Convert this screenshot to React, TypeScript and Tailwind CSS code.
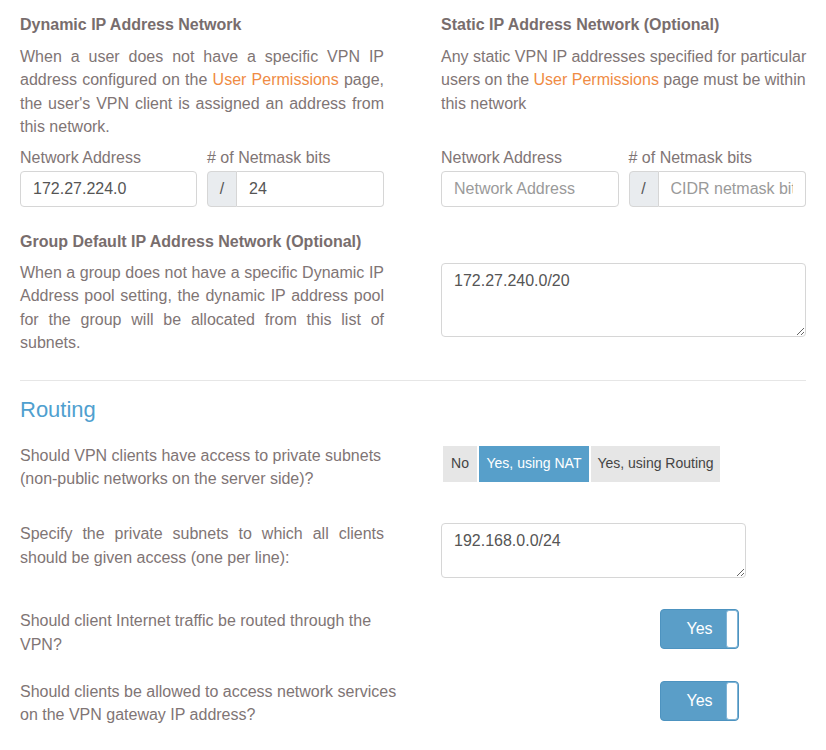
import { useState } from "react";

const font = { fontFamily: '"Liberation Sans", Arial, sans-serif' };

function CidrInputs({ address, bits }: { address?: string; bits?: string }) {
  return (
    <div>
      <div className="grid grid-cols-2 gap-[10px]">
        <div className="leading-[23.5px]">Network Address</div>
        <div className="leading-[23.5px]">
          # of Netmask bits
        </div>
      </div>
      <div className="grid grid-cols-2 gap-[10px] mt-[1px]">
        <input
          type="text"
          defaultValue={address}
          placeholder="Network Address"
          className="h-[36px] w-full px-3 border border-[#d6d6d6] rounded-[4px] text-[16px] text-[#555] placeholder:text-[#9a9a9a] outline-none"
        />
        <div className="flex h-[36px]">
          <span className="w-[30px] shrink-0 flex items-center justify-center bg-[#e9ecef] border border-[#d6d6d6] rounded-l-[4px] text-[#555]">
            /
          </span>
          <input
            type="text"
            defaultValue={bits}
            placeholder="CIDR netmask bits"
            className="min-w-0 flex-1 px-3 border border-l-0 border-[#d6d6d6] rounded-r-[4px] text-[16px] text-[#555] placeholder:text-[#9a9a9a] outline-none"
          />
        </div>
      </div>
    </div>
  );
}

function Toggle() {
  const [on, setOn] = useState(true);
  return (
    <button
      onClick={() => setOn(!on)}
      className="w-[79px] h-[40px] flex items-stretch rounded-[4px] border border-[#4d93c0] bg-[#5a9ec8] overflow-hidden"
    >
      <span className="flex-1 flex items-center justify-center text-white text-[16px] pl-[12px]">
        {on ? "Yes" : "No"}
      </span>
      <span className="w-[12px] bg-white rounded-[3px] border border-[#7fb3d5]" />
    </button>
  );
}

export default function App() {
  const [access, setAccess] = useState("nat");

  const options = [
    { id: "no", label: "No", w: "w-[34px]" },
    { id: "nat", label: "Yes, using NAT", w: "w-[110px]" },
    { id: "routing", label: "Yes, using Routing", w: "w-[129px]" },
  ];

  return (
    <div className="w-[826px] min-h-[750px] bg-white px-5 pt-[13px] text-[16px] text-[#7f7575] leading-[23.5px]" style={font}>
      {/* IP networks */}
      <div className="grid grid-cols-[364px_365px] gap-x-[57px]">
        <div>
          <h3 className="font-bold text-[#786d6d] mb-2">Dynamic IP Address Network</h3>
          <p className="text-justify">
            When a user does not have a specific VPN IP address configured on the{" "}
            <a className="text-[#ef8b44]">User Permissions</a> page, the user's VPN client is assigned an
            address from this network.
          </p>
        </div>
        <div>
          <h3 className="font-bold text-[#786d6d] mb-2">Static IP Address Network (Optional)</h3>
          <p className="w-[372px]">
            Any static VPN IP addresses specified for particular users on the{" "}
            <a className="text-[#ef8b44]">User Permissions</a> page must be within this network
          </p>
        </div>
        <div className="mt-[7.5px]">
          <CidrInputs address="172.27.224.0" bits="24" />
        </div>
        <div className="mt-[7.5px]">
          <CidrInputs />
        </div>
      </div>

      <h3 className="font-bold text-[#786d6d] mt-[23px] mb-[7.5px]">
        Group Default IP Address Network (Optional)
      </h3>
      <div className="grid grid-cols-[364px_365px] gap-x-[57px]">
        <p className="text-justify">
          When a group does not have a specific Dynamic IP Address pool setting, the dynamic IP address
          pool for the group will be allocated from this list of subnets.
        </p>
        <textarea
          defaultValue="172.27.240.0/20"
          className="mt-[2px] h-[74px] w-full px-3 py-[5px] border border-[#d6d6d6] rounded-[4px] text-[16px] text-[#555] outline-none"
        />
      </div>

      <hr className="mt-[25px] border-0 border-t border-[#e6e6e6]" />

      {/* Routing */}
      <h2 className="mt-[16px] text-[22px] leading-[26px] text-[#4fa0cf]">Routing</h2>

      <div className="mt-[21px] flex">
        <div className="w-[364px]">
          Should VPN clients have access to private subnets (non-public networks on the server side)?
        </div>
        <div className="ml-[59px] mt-[2px] flex gap-[2px] h-[36px]">
          {options.map((o) => (
            <button
              key={o.id}
              onClick={() => setAccess(o.id)}
              className={`${o.w} text-[14px] ${
                access === o.id ? "bg-[#579fca] text-white" : "bg-[#e6e6e6] text-[#444]"
              }`}
            >
              {o.label}
            </button>
          ))}
        </div>
      </div>

      <div className="mt-[31.5px] flex">
        <div className="w-[364px] text-justify">
          Specify the private subnets to which all clients should be given access (one per line):
        </div>
        <textarea
          defaultValue="192.168.0.0/24"
          className="ml-[57px] mt-[1px] w-[305px] h-[55px] px-3 py-[5px] border border-[#d6d6d6] rounded-[4px] text-[16px] text-[#555] outline-none"
        />
      </div>

      <div className="mt-[31px] flex">
        <div className="w-[393px]">Should client Internet traffic be routed through the VPN?</div>
        <div className="ml-[247px]">
          <Toggle />
        </div>
      </div>

      <div className="mt-[23.5px] flex">
        <div className="w-[393px]">Should clients be allowed to access network services on the VPN gateway IP address?</div>
        <div className="ml-[247px] mt-[1px]">
          <Toggle />
        </div>
      </div>
    </div>
  );
}
